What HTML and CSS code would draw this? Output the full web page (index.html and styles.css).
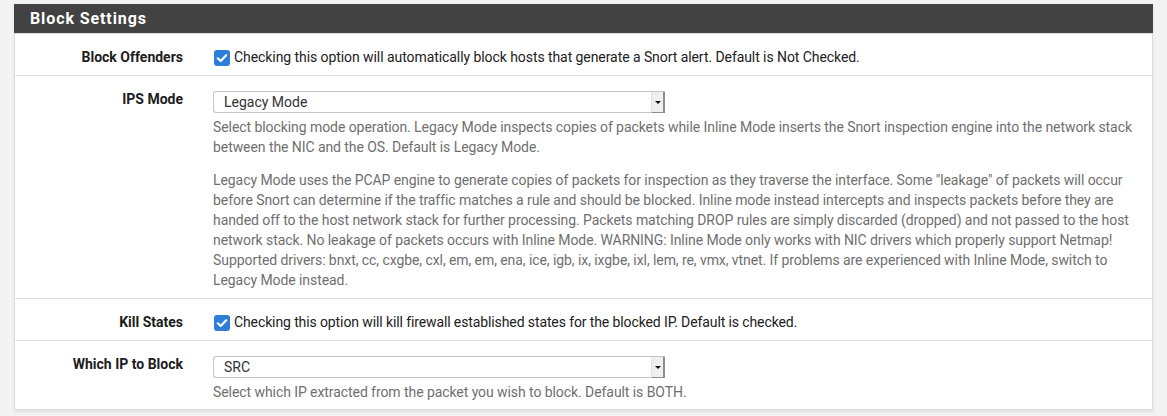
FILE: index.html
```html
<!DOCTYPE html>
<html>
<head>
<meta charset="utf-8">
<link rel="stylesheet" href="styles.css">
</head>
<body>
<div class="panel">
  <div class="panel-heading">Block Settings</div>
  <div class="row">
    <div class="label">Block Offenders</div>
    <div class="content">
      <div class="check-line"><span class="checkbox"><svg viewBox="0 0 16 16" width="16" height="16"><rect x="0" y="0" width="16" height="16" rx="3" fill="#2d7ed8"/><path d="M3.8 8.3 L6.7 11 L12.2 5.2" fill="none" stroke="#fff" stroke-width="2.2" stroke-linecap="round" stroke-linejoin="round"/></svg></span>Checking this option will automatically block hosts that generate a Snort alert. Default is Not Checked.</div>
    </div>
  </div>
  <div class="row">
    <div class="label">IPS Mode</div>
    <div class="content">
      <div class="select"><span class="select-text">Legacy Mode</span><span class="select-arrow"></span></div>
      <p class="help">Select blocking mode operation. Legacy Mode inspects copies of packets while Inline Mode inserts the Snort inspection engine into the network stack between the NIC and the OS. Default is Legacy Mode.</p>
      <p class="help help-gap">Legacy Mode uses the PCAP engine to generate copies of packets for inspection as they traverse the interface. Some "leakage" of packets will occur before Snort can determine if the traffic matches a rule and should be blocked. Inline mode instead intercepts and inspects packets before they are handed off to the host network stack for further processing. Packets matching DROP rules are simply discarded (dropped) and not passed to the host network stack. No leakage of packets occurs with Inline Mode. WARNING: Inline Mode only works with NIC drivers which properly support Netmap! Supported drivers: bnxt, cc, cxgbe, cxl, em, em, ena, ice, igb, ix, ixgbe, ixl, lem, re, vmx, vtnet. If problems are experienced with Inline Mode, switch to Legacy Mode instead.</p>
    </div>
  </div>
  <div class="row">
    <div class="label">Kill States</div>
    <div class="content">
      <div class="check-line tight"><span class="checkbox"><svg viewBox="0 0 16 16" width="16" height="16"><rect x="0" y="0" width="16" height="16" rx="3" fill="#2d7ed8"/><path d="M3.8 8.3 L6.7 11 L12.2 5.2" fill="none" stroke="#fff" stroke-width="2.2" stroke-linecap="round" stroke-linejoin="round"/></svg></span>Checking this option will kill firewall established states for the blocked IP. Default is checked.</div>
    </div>
  </div>
  <div class="row row-last">
    <div class="label">Which IP to Block</div>
    <div class="content">
      <div class="select"><span class="select-text">SRC</span><span class="select-arrow"></span></div>
      <p class="help">Select which IP extracted from the packet you wish to block. Default is BOTH.</p>
    </div>
  </div>
</div>
</body>
</html>
```

FILE: styles.css
```css
html, body {
  margin: 0;
  padding: 0;
}
body {
  background: #f3f3f3;
  font-family: Roboto, "Liberation Sans", sans-serif;
  font-size: 14px;
  line-height: 20px;
  color: #212121;
  width: 1167px;
  height: 416px;
  overflow: hidden;
}
.panel {
  margin: 4px 0 0 14px;
  width: 1137px;
  background: #fff;
  border: 1px solid #dcdcdc;
  border-top: 0;
  box-shadow: 0 2px 3px rgba(0,0,0,0.08);
}
.panel-heading {
  background: #424242;
  color: #fff;
  font-weight: bold;
  font-size: 16px;
  letter-spacing: 0.9px;
  height: 29px;
  line-height: 29px;
  margin: 0 -1px;
  padding-left: 16px;
}
.row {
  display: flex;
  border-top: 1px solid #e0e0e0;
  padding: 13px 0 8px 0;
}
.panel-heading + .row {
  border-top: 1px solid #dedede;
}
.row-last {
  padding-bottom: 7px;
}
.label {
  width: 168px;
  padding-right: 15px;
  text-align: right;
  font-weight: bold;
  color: #1c1c1c;
  flex: none;
}
.content {
  flex: 1;
  padding: 0 10px 0 15px;
  color: #212121;
  letter-spacing: -0.07px;
}
.check-line {
  display: flex;
  align-items: center;
}
.check-line.tight {
  letter-spacing: -0.11px;
}
.checkbox {
  display: inline-block;
  width: 16px;
  height: 16px;
  margin: 1px 4px 0 1px;
  flex: none;
}
.checkbox svg {
  display: block;
}
.select {
  display: flex;
  width: 451px;
  height: 20px;
  margin-top: 2px;
  border: 1px solid #c4c4c4;
  border-right: 0;
  border-radius: 3px 0 0 3px;
  background: #fff;
  color: #333;
  letter-spacing: 0;
}
.select-text {
  flex: 1;
  padding-left: 10px;
  line-height: 20px;
}
.select-arrow {
  width: 11px;
  height: 20px;
  background: #efefef;
  border-left: 1px solid #e4e4e4;
  border-right: 2px solid #8c8c8c;
  border-bottom: 1px solid #8c8c8c;
  margin-bottom: -1px;
  position: relative;
}
.select-arrow::after {
  content: "";
  position: absolute;
  left: 3px;
  top: 9px;
  border-left: 3px solid transparent;
  border-right: 3px solid transparent;
  border-top: 3px solid #111;
}
.help {
  margin: 4px 0 0 0;
  color: #6f6f6f;
}
.help-gap {
  margin-top: 13px;
}
```
